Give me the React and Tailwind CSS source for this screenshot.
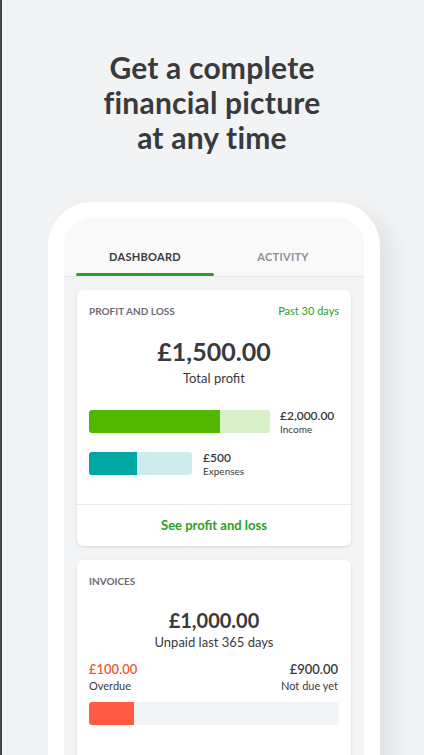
export default function App() {
  return (
    <div
      className="relative w-[424px] h-[755px] overflow-hidden bg-[#f2f3f5] border-l-2 border-[#45464a] text-[#393a3d]"
      style={{ fontFamily: "Lato, 'Noto Sans', sans-serif" }}
    >
      <h1 className="pt-[50px] ml-[-2px] text-center text-[30px] leading-[35px] font-bold tracking-[0.2px] text-[#393a3d]">
        Get a complete
        <br />
        financial picture
        <br />
        at any time
      </h1>

      <div className="mt-[47px] ml-[46px] w-[332px] h-[600px] rounded-t-[44px] bg-white pt-[16px] px-[16px] shadow-[12px_10px_24px_rgba(0,0,0,0.08)]">
        <div className="h-full rounded-t-[28px] overflow-hidden bg-[#f3f4f6]">
          {/* tabs */}
          <div className="h-[59px] bg-[#f9f9f9] border-b border-[#e8e9eb] flex px-[12px]">
            <div className="flex-1 flex flex-col justify-end">
              <div className="text-center text-[11px] leading-[16px] font-bold tracking-[0.3px] text-[#393a3d]">
                DASHBOARD
              </div>
              <div className="mt-[8px] h-[3px] rounded-full bg-[#2ca01c]" />
            </div>
            <div className="flex-1 flex flex-col justify-end">
              <div className="text-center text-[11px] leading-[16px] font-bold tracking-[0.3px] text-[#8d9096]">
                ACTIVITY
              </div>
              <div className="mt-[8px] h-[3px]" />
            </div>
          </div>

          <div className="px-[13px] pt-[13px] flex flex-col gap-[14px]">
            {/* profit and loss */}
            <div className="bg-white rounded-[6px] shadow-[0_1px_3px_rgba(0,0,0,0.12)]">
              <div className="px-[12px] pt-[14px] pb-[29px]">
                <div className="flex justify-between items-center">
                  <span className="text-[10px] leading-[14px] font-bold text-[#6b6c72]">PROFIT AND LOSS</span>
                  <span className="text-[11px] leading-[14px] text-[#2ca01c]">Past 30 days</span>
                </div>
                <div className="mt-[18px] text-center text-[25px] leading-[30px] font-bold">£1,500.00</div>
                <div className="mt-[3px] text-center text-[13px] leading-[18px]">Total profit</div>

                <div className="mt-[23px] h-[23px] flex items-center gap-[10px]">
                  <div className="w-[181px] h-[23px] rounded-[3px] bg-[#daf0c8] overflow-hidden flex">
                    <div className="w-[131px] h-full bg-[#53b700]" />
                  </div>
                  <div>
                    <div className="text-[12px] leading-[15px] font-semibold">£2,000.00</div>
                    <div className="text-[10px] leading-[13px] text-[#393a3d]">Income</div>
                  </div>
                </div>

                <div className="mt-[19px] h-[23px] flex items-center gap-[11px]">
                  <div className="w-[103px] h-[23px] rounded-[3px] bg-[#cdecee] overflow-hidden flex">
                    <div className="w-[48px] h-full bg-[#00a6a4]" />
                  </div>
                  <div>
                    <div className="text-[12px] leading-[15px] font-semibold">£500</div>
                    <div className="text-[10px] leading-[13px] text-[#393a3d]">Expenses</div>
                  </div>
                </div>
              </div>
              <div className="border-t border-[#e6e7e9] h-[42px] flex items-center justify-center text-[13px] font-bold text-[#2ca01c]">
                See profit and loss
              </div>
            </div>

            {/* invoices */}
            <div className="bg-white rounded-[6px] shadow-[0_1px_3px_rgba(0,0,0,0.12)] px-[12px] pt-[14px] pb-[40px]">
              <div className="text-[10px] leading-[14px] font-bold text-[#6b6c72]">INVOICES</div>
              <div className="mt-[19px] text-center text-[20px] leading-[26px] font-bold">£1,000.00</div>
              <div className="text-center text-[13px] leading-[18px]">Unpaid last 365 days</div>
              <div className="mt-[10px] flex justify-between pr-[1px]">
                <div>
                  <div className="text-[13px] leading-[17px] font-semibold text-[#ec5b2c]">£100.00</div>
                  <div className="text-[11px] leading-[16px]">Overdue</div>
                </div>
                <div className="text-right">
                  <div className="text-[13px] leading-[17px] font-semibold">£900.00</div>
                  <div className="text-[11px] leading-[16px]">Not due yet</div>
                </div>
              </div>
              <div className="mt-[8px] h-[23px] rounded-[3px] bg-[#f3f4f6] overflow-hidden flex">
                <div className="w-[45px] h-full bg-[#ff5a43]" />
              </div>
            </div>
          </div>
        </div>
      </div>
    </div>
  );
}
